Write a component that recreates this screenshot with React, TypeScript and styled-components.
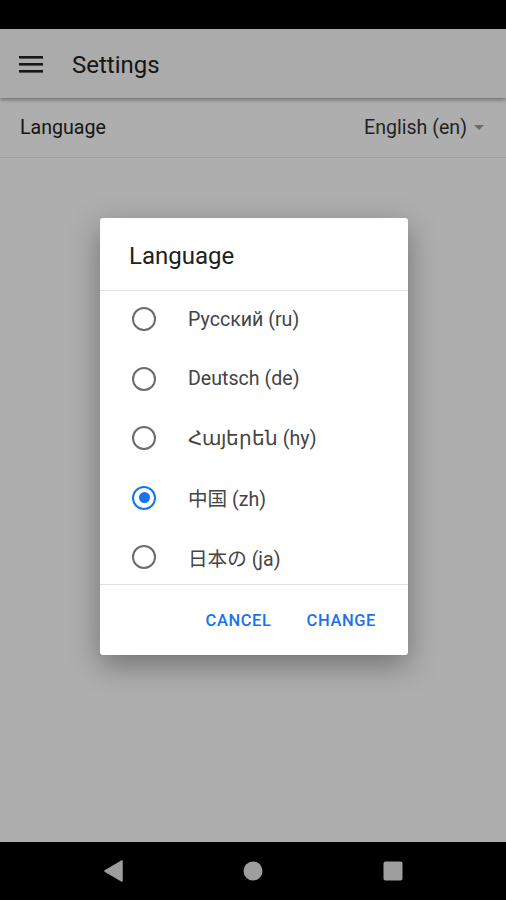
import React from "react";
import styled, { createGlobalStyle } from "styled-components";

const Global = createGlobalStyle`
  html, body { margin: 0; padding: 0; }
  body { font-family: Roboto, "Noto Sans", "Noto Sans CJK SC", sans-serif; background: #000; }
`;

const Screen = styled.div`
  position: relative;
  width: 506px;
  height: 900px;
  display: flex;
  flex-direction: column;
  background: #fafafa;
  overflow: hidden;
`;

const StatusBar = styled.div`
  height: 29px;
  background: #000;
`;

const AppBar = styled.div`
  height: 69px;
  display: flex;
  align-items: center;
  padding-left: 19px;
  gap: 27px;
  background: #f5f5f5;
  box-shadow: 0 2px 4px rgba(0, 0, 0, 0.35);
  position: relative;
  z-index: 1;
`;

const Title = styled.div`
  font-size: 24px;
  color: #212121;
  padding-top: 2px;
`;

const Content = styled.div`
  flex: 1;
  background: #fafafa;
`;

const Row = styled.div`
  height: 60px;
  display: flex;
  align-items: center;
  justify-content: space-between;
  padding: 0 22px 0 20px;
  border-bottom: 1px solid #e4e4e4;
  font-size: 19.6px;
  color: #212121;
  box-sizing: border-box;
`;

const Value = styled.div`
  display: flex;
  align-items: center;
  gap: 7px;
  color: #333;
`;

const Caret = styled.span`
  width: 0;
  height: 0;
  border-left: 5px solid transparent;
  border-right: 5px solid transparent;
  border-top: 5px solid #9a9a9a;
`;

const NavBar = styled.div`
  height: 58px;
  background: #000;
  display: flex;
  align-items: center;
  justify-content: center;
  position: relative;
  z-index: 3;
`;

const NavSlot = styled.div`
  width: 140px;
  display: flex;
  justify-content: center;
`;

const Scrim = styled.div`
  position: absolute;
  left: 0;
  right: 0;
  top: 29px;
  bottom: 58px;
  background: rgba(0, 0, 0, 0.3);
  z-index: 2;
`;

const Dialog = styled.div`
  position: absolute;
  left: 100px;
  top: 218px;
  width: 308px;
  background: #fff;
  border-radius: 3px;
  box-shadow: 0 10px 30px rgba(0, 0, 0, 0.35);
  display: flex;
  flex-direction: column;
  z-index: 3;
`;

const DialogTitle = styled.div`
  height: 73px;
  display: flex;
  align-items: center;
  padding: 4px 0 0 29px;
  font-size: 24px;
  color: #212121;
  border-bottom: 1px solid #e0e0e0;
  box-sizing: border-box;
`;

const List = styled.div`
  height: 293px;
  overflow: hidden;
  display: flex;
  flex-direction: column;
  border-bottom: 1px solid #e0e0e0;
`;

const Item = styled.div`
  flex: none;
  height: 59.5px;
  box-sizing: border-box;
  padding: 0 0 3px 32px;
  display: flex;
  align-items: center;
  gap: 32px;
  font-size: 19.6px;
  color: #444;
`;

const Radio = styled.span<{ $on?: boolean }>`
  width: 20px;
  height: 20px;
  border-radius: 50%;
  border: 2px solid ${(p) => (p.$on ? "#1a73e8" : "#6b6b6b")};
  display: flex;
  align-items: center;
  justify-content: center;
  box-sizing: content-box;
  &::after {
    content: "";
    width: 11px;
    height: 11px;
    border-radius: 50%;
    background: ${(p) => (p.$on ? "#1a73e8" : "transparent")};
  }
`;

const Actions = styled.div`
  height: 70px;
  display: flex;
  align-items: center;
  justify-content: flex-end;
  padding-right: 32px;
  gap: 35px;
`;

const Btn = styled.button`
  background: none;
  border: none;
  padding: 0;
  font-family: Roboto, sans-serif;
  font-size: 16.5px;
  font-weight: 500;
  letter-spacing: 0.6px;
  color: #1a73e8;
`;

const langs = [
  { label: "Русский (ru)" },
  { label: "Deutsch (de)" },
  { label: "Հայերեն (hy)" },
  { label: "中国 (zh)", on: true },
  { label: "日本の (ja)" },
];

export default function App() {
  return (
    <Screen>
      <Global />
      <StatusBar />
      <AppBar>
        <svg width="26" height="20" viewBox="0 0 26 20">
          <rect x="0" y="2" width="24" height="2.6" fill="#222" />
          <rect x="0" y="9" width="24" height="2.6" fill="#222" />
          <rect x="0" y="16" width="24" height="2.6" fill="#222" />
        </svg>
        <Title>Settings</Title>
      </AppBar>
      <Content>
        <Row>
          <span>Language</span>
          <Value>
            English (en) <Caret />
          </Value>
        </Row>
      </Content>
      <NavBar>
        <NavSlot>
          <svg width="20" height="22" viewBox="0 0 20 22">
            <path d="M19 1 L19 21 L2 11 Z" fill="#9e9e9e" stroke="#9e9e9e" strokeLinejoin="round" strokeWidth="1.5" />
          </svg>
        </NavSlot>
        <NavSlot>
          <svg width="20" height="20" viewBox="0 0 20 20">
            <circle cx="10" cy="10" r="9.5" fill="#9e9e9e" />
          </svg>
        </NavSlot>
        <NavSlot>
          <svg width="20" height="20" viewBox="0 0 20 20">
            <rect x="0.5" y="0.5" width="19" height="19" rx="2" fill="#9e9e9e" />
          </svg>
        </NavSlot>
      </NavBar>
      <Scrim />
      <Dialog>
        <DialogTitle>Language</DialogTitle>
        <List>
          {langs.map((l) => (
            <Item key={l.label}>
              <Radio $on={l.on} />
              <span>{l.label}</span>
            </Item>
          ))}
        </List>
        <Actions>
          <Btn>CANCEL</Btn>
          <Btn>CHANGE</Btn>
        </Actions>
      </Dialog>
    </Screen>
  );
}
